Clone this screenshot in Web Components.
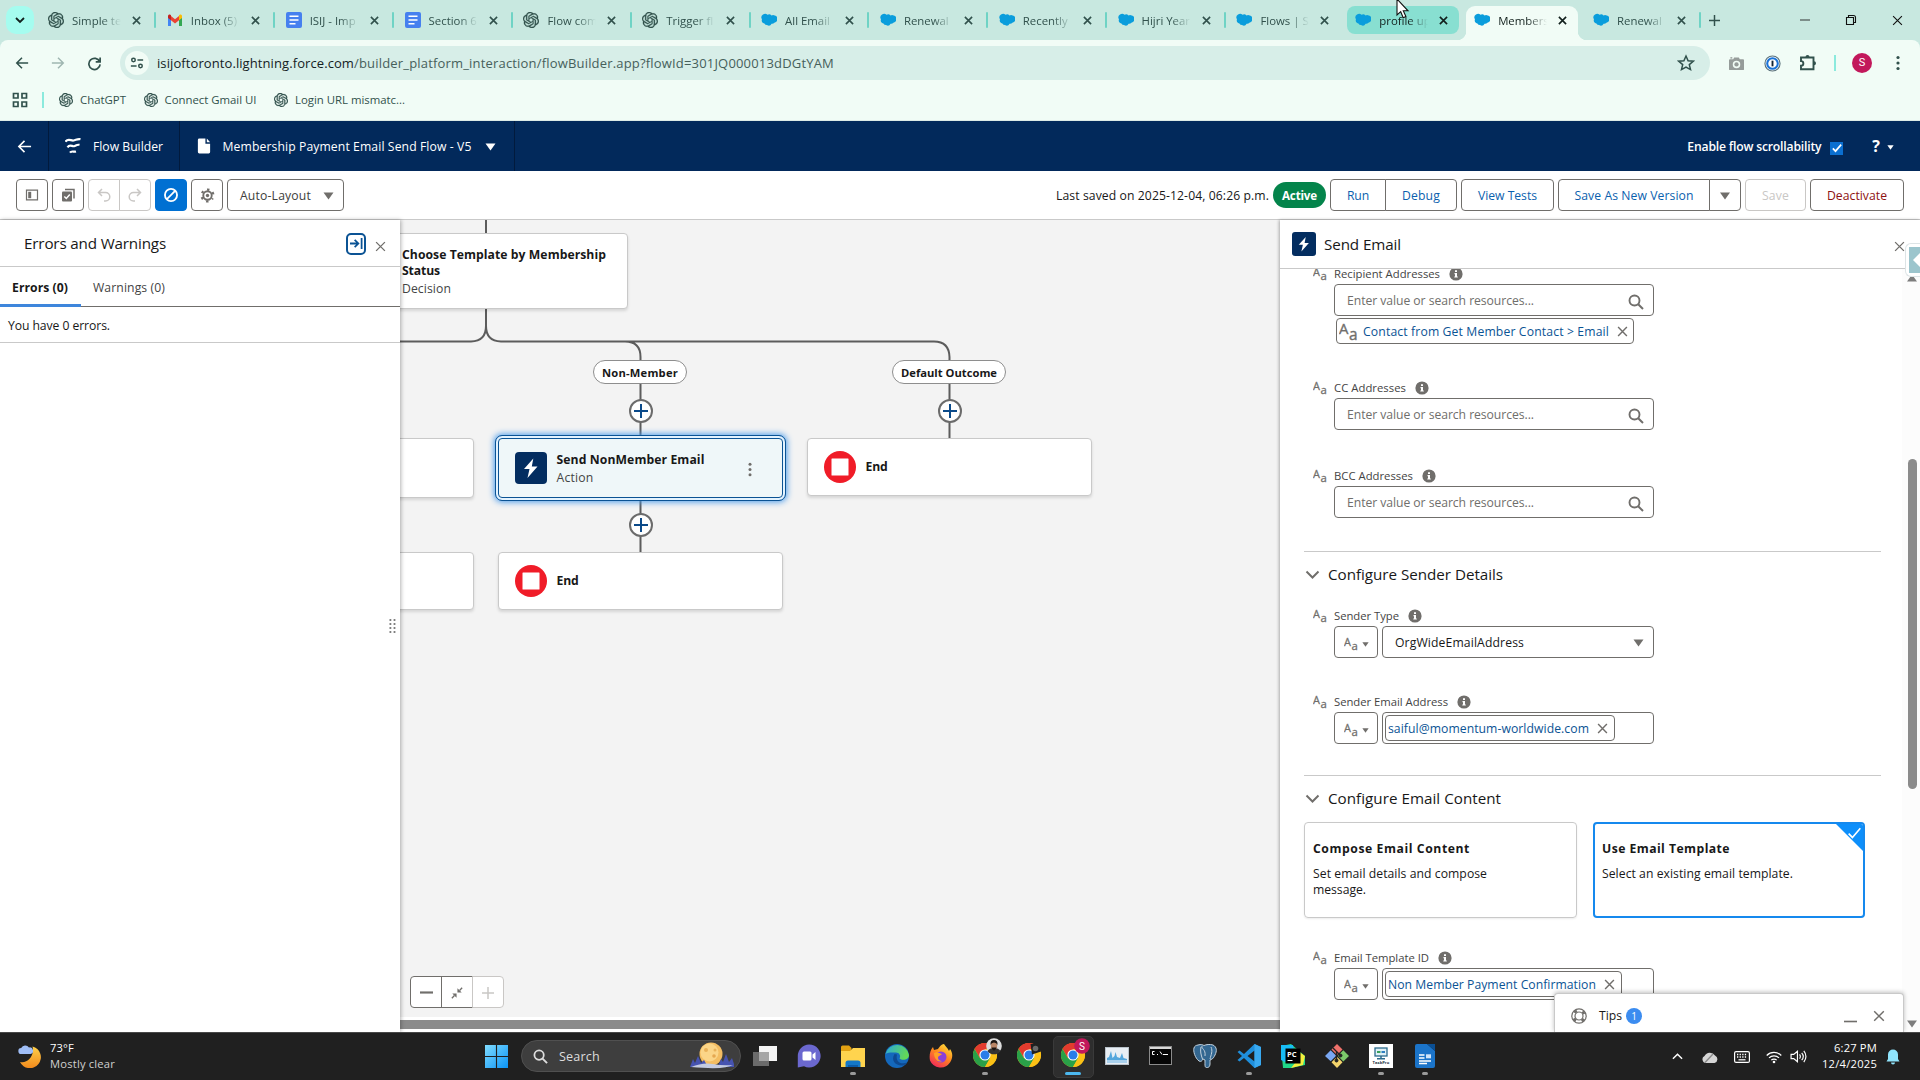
<!DOCTYPE html>
<html lang="en">
<head>
<meta charset="utf-8">
<title>Flow Builder</title>
<style>
html,body{margin:0;height:1080px;width:1920px;overflow:hidden}
body{font-family:"Open Sans","Noto Sans",sans-serif;font-size:12.2px;color:#181818;background:#fff}
</style>
</head>
<body>
<desktop-screen></desktop-screen>
<script>
const define = (tag, css, html) => customElements.define(tag, class extends HTMLElement {
  connectedCallback() {
    if (this.shadowRoot) return;
    const root = this.attachShadow({ mode: 'open' });
    root.innerHTML = `<style>*{box-sizing:border-box}${css}</style>${typeof html === 'function' ? html(this) : html}`;
  }
});

/* Text run whose letter spacing is tuned to a given width. */
customElements.define('fit-text', class extends HTMLElement {
  connectedCallback() {
    if (this.shadowRoot) return;
    this.attachShadow({ mode: 'open' }).innerHTML =
      '<style>:host{display:inline-block;white-space:nowrap;flex:none}</style><slot></slot>';
    const w = parseFloat(this.getAttribute('w'));
    if (!w) return;
    const n = this.textContent.length;
    const natural = this.getBoundingClientRect().width;
    this.style.letterSpacing = ((w - natural) / n).toFixed(3) + 'px';
    this.style.width = w + 'px';
  }
});

const chromeLogo = '<circle cx="12" cy="12" r="12" fill="#fbc116"/><path d="M12 12 1.6 6A12 12 0 0 1 22.4 6Z" fill="#e33b2e"/><path d="M12 6H22.4A12 12 0 0 0 1.6 6L6.8 15Z" fill="#e33b2e"/><path d="M1.6 6A12 12 0 0 0 12 24L17.2 15 12 12 6.8 15Z" fill="#2aa148"/><path d="M17.2 15 12 24A12 12 0 0 0 22.4 6H12Z" fill="#fbc116"/><circle cx="12" cy="12" r="5.6" fill="#fff"/><circle cx="12" cy="12" r="4.5" fill="#2a7de9"/>';
const ICONS = {
  openai: ['0 0 24 24', '<path fill="currentColor" stroke="currentColor" stroke-width=".5" d="M22.2819 9.8211a5.9847 5.9847 0 0 0-.5157-4.9108 6.0462 6.0462 0 0 0-6.5098-2.9A6.0651 6.0651 0 0 0 4.9807 4.1818a5.9847 5.9847 0 0 0-3.9977 2.9 6.0462 6.0462 0 0 0 .7427 7.0966 5.98 5.98 0 0 0 .511 4.9107 6.051 6.051 0 0 0 6.5146 2.9001A5.9847 5.9847 0 0 0 13.2599 24a6.0557 6.0557 0 0 0 5.7718-4.2058 5.9894 5.9894 0 0 0 3.9977-2.9001 6.0557 6.0557 0 0 0-.7475-7.0729zm-9.022 12.6081a4.4755 4.4755 0 0 1-2.8764-1.0408l.1419-.0804 4.7783-2.7582a.7948.7948 0 0 0 .3927-.6813v-6.7369l2.02 1.1686a.071.071 0 0 1 .038.052v5.5826a4.504 4.504 0 0 1-4.4945 4.4944zm-9.6607-4.1254a4.4708 4.4708 0 0 1-.5346-3.0137l.142.0852 4.783 2.7582a.7712.7712 0 0 0 .7806 0l5.8428-3.3685v2.3324a.0804.0804 0 0 1-.0332.0615L9.74 19.9502a4.4992 4.4992 0 0 1-6.1408-1.6464zM2.3408 7.8956a4.485 4.485 0 0 1 2.3655-1.9728V11.6a.7664.7664 0 0 0 .3879.6765l5.8144 3.3543-2.0201 1.1685a.0757.0757 0 0 1-.071 0l-4.8303-2.7865A4.504 4.504 0 0 1 2.3408 7.872zm16.5963 3.8558L13.1038 8.364 15.1192 7.2a.0757.0757 0 0 1 .071 0l4.8303 2.7913a4.4944 4.4944 0 0 1-.6765 8.1042v-5.6772a.79.79 0 0 0-.407-.667zm2.0107-3.0231l-.142-.0852-4.7735-2.7818a.7759.7759 0 0 0-.7854 0L9.409 9.2297V6.8974a.0662.0662 0 0 1 .0284-.0615l4.8303-2.7866a4.4992 4.4992 0 0 1 6.6802 4.66zM8.3065 12.863l-2.02-1.1638a.0804.0804 0 0 1-.038-.0567V6.0742a4.4992 4.4992 0 0 1 7.3757-3.4537l-.142.0805L8.704 5.459a.7948.7948 0 0 0-.3927.6813zm1.0976-2.3654l2.602-1.4998 2.6069 1.4998v2.9994l-2.5974 1.4997-2.6067-1.4997Z"/>'],
  gmail: ['0 0 16 16', '<path fill="#4285f4" d="M1 3.5V14h3V7.5L1 5z"/><path fill="#34a853" d="M15 3.5V14h-3V7.5L15 5z"/><path fill="#ea4335" d="M4 4v4.2l4 3.2 4-3.2V4L8 7.2z"/><path fill="#c5221f" d="M1 4a1.6 1.6 0 0 1 3-.7v5L1 5.9z"/><path fill="#fbbc04" d="M15 4a1.6 1.6 0 0 0-3-.7v5l3-2.4z"/>'],
  docs: ['0 0 16 16', '<rect width="16" height="16" rx="2" fill="#4680ef"/><path stroke="#fff" stroke-width="1.6" d="M3.5 4.2h9M3.5 8h9M3.5 11.8h6"/>'],
  cloud: ['0 0 16 14', '<path fill="#0a9ddc" d="M6.5 1.8a3.2 3.2 0 0 1 4 .6 3 3 0 0 1 3.3.1A3.7 3.7 0 0 1 13.4 9.700 3 3 0 0 1 10.600 10.800 3.300 3.300 0 0 1 6 12.100 2.900 2.900 0 0 1 3.400 10.500 3 3 0 0 1 1 6.300 3.400 3.400 0 0 1 2 1.600 3.500 3.500 0 0 1 6.500 1.800z"/>'],
  x: ['0 0 10 10', '<path stroke="currentColor" stroke-width="var(--sw,1.5)" d="M1 1l8 8M9 1l-8 8"/>'],
  chev: ['0 0 10 10', '<path fill="none" stroke="currentColor" stroke-width="var(--sw,1.8)" d="M1 3l4 4 4-4"/>'],
  chevup: ['0 0 12 12', '<path fill="none" stroke="currentColor" stroke-width="1.6" d="M1 8.500l5-5 5 5"/>'],
  plus: ['0 0 12 12', '<path stroke="currentColor" stroke-width="var(--sw,1.6)" d="M6 0v12M0 6h12"/>'],
  minus: ['0 0 12 12', '<path stroke="currentColor" stroke-width="var(--sw,1)" d="M0 6h12"/>'],
  restore: ['0 0 12 12', '<path fill="none" stroke="#111" stroke-width="1.100" d="M1.500 3.500h7v7h-7zM3.500 3.500v-2h5a2 2 0 0 1 2 2v5h-2"/>'],
  back: ['0 0 16 16', '<path fill="none" stroke="currentColor" stroke-width="var(--sw,1.7)" d="M15 8H2M8 2L2 8l6 6"/>'],
  fwd: ['0 0 16 16', '<path fill="none" stroke="currentColor" stroke-width="1.7" d="M1 8h13M8 2l6 6-6 6"/>'],
  reload: ['0 0 16 16', '<path fill="none" stroke="currentColor" stroke-width="1.800" d="M13.500 6A6 6 0 1 0 14 9M14 1.500V6.200H9.300"/>'],
  tune: ['0 0 16 16', '<g fill="none" stroke="#31514c" stroke-width="1.700"><circle cx="4" cy="4.500" r="2"/><circle cx="12" cy="11.500" r="2"/><path d="M8.500 4.500H15M1 11.500h6.500"/></g>'],
  star: ['0 0 18 18', '<path fill="none" stroke="#31514c" stroke-width="1.500" d="M9 2l2.100 4.700 5.100.500-3.900 3.400 1.200 5L9 13l-4.500 2.600 1.200-5L1.800 7.200l5.100-.500z"/>'],
  camera: ['0 0 16 16', '<path fill="#969c9a" fill-rule="evenodd" d="M5.500 1.500h5l1 2H15q1 0 1 1V14q0 1-1 1H1q-1 0-1-1V4.500q0-1 1-1h3.500zM8 5a4 4 0 1 0 0 8 4 4 0 0 0 0-8z"/><circle cx="8" cy="9" r="2.300" fill="#969c9a"/><path stroke="#969c9a" stroke-width="1.500" d="M1.500 2h2"/>'],
  onepass: ['0 0 18 18', '<circle cx="9" cy="9" r="8" fill="#fff" stroke="#587079" stroke-width="1.200"/><circle cx="9" cy="9" r="5.600" fill="#fff" stroke="#1a73d8" stroke-width="2.200"/><path stroke="#123" stroke-width="2" d="M9 6v6"/>'],
  puzzle: ['0 0 18 18', '<path fill="none" stroke="#31514c" stroke-width="1.900" d="M2 3.500h12.500v11.800H2v-3.500a2.300 2.300 0 0 0 0-4.700z"/><path fill="#31514c" d="M6.500 3a2 2 0 0 1 4 0zM15 7.300a2 2 0 0 1 0 4z"/>'],
  dots: ['0 0 4 16', '<g fill="currentColor"><circle cx="2" cy="2.500" r="1.600"/><circle cx="2" cy="8" r="1.600"/><circle cx="2" cy="13.500" r="1.600"/></g>'],
  apps: ['0 0 16 16', '<g fill="none" stroke="#31514c" stroke-width="1.700"><path d="M1.500 1.500h4.500v4.500H1.500zM10 1.500h4.500v4.500H10zM1.500 10h4.500v4.500H1.500zM10 10h4.500v4.500H10z"/></g>'],
  flow: ['0 0 16 18', '<g fill="none" stroke="#fff" stroke-width="2.200"><path d="M.500 4.800C3 .500 6 4 8.500 3.500S13 1.500 15.500 2.300"/><path d="M2.500 10.300C5 6.500 7 9.700 9 9.200s3-2 5.500-1.300"/><path d="M5 15.700c1.500-2.400 3.500-.500 6-1.200"/></g>'],
  file: ['0 0 14 17', '<path fill="#fff" d="M2 .500h6.500V6H13.500v9q0 1.500-1.500 1.500H2Q.500 16.500.500 15V2Q.500.500 2 .500zM10 .500l3.500 4H10z"/>'],
  tri: ['0 0 10 8', '<path fill="currentColor" d="M0 .500h10L5 7.500z"/>'],
  check: ['0 0 12 12', '<path fill="none" stroke="#fff" stroke-width="var(--sw,2)" d="M1 6.500l3.200 3.300L11 2"/>'],
  panel: ['0 0 14 14', '<path fill="none" stroke="#706e6b" stroke-width="1.200" d="M1.500 2.200h11v9.600h-11z"/><path fill="#706e6b" d="M3.200 3.800h3v6.400h-3z"/>'],
  multi: ['0 0 14 14', '<path fill="none" stroke="#706e6b" stroke-width="1.500" d="M4 1.500h9v9"/><rect x="1" y="3.500" width="10" height="10" rx="1" fill="#706e6b"/><path fill="none" stroke="#fff" stroke-width="1.500" d="M3.300 8.500l2 2 3.500-4"/>'],
  undo: ['0 0 14 14', '<path fill="none" stroke="currentColor" stroke-width="1.500" d="M5 1L1.500 4.500 5 8M1.500 4.500H8.500a4.300 4.300 0 0 1 0 8.600H7"/>'],
  redo: ['0 0 14 14', '<path fill="none" stroke="currentColor" stroke-width="1.500" d="M9 1l3.500 3.500L9 8M12.500 4.500H5.500a4.300 4.300 0 0 0 0 8.600H7"/>'],
  ban: ['0 0 14 14', '<circle cx="7" cy="7" r="5.300" fill="none" stroke="#fff" stroke-width="1.600"/><path stroke="#fff" stroke-width="1.600" d="M3.400 10.600l7.200-7.200"/>'],
  gear: ['0 0 16 16', '<circle cx="8" cy="8" r="4.500" fill="none" stroke="#706e6b" stroke-width="2"/><circle cx="8" cy="8" r="6.300" fill="none" stroke="#706e6b" stroke-width="2.400" stroke-dasharray="2.400 4.200" stroke-dashoffset="1.200" transform="rotate(30 8 8)"/><circle cx="8" cy="8" r="1.800" fill="#706e6b"/>'],
  collapse: ['0 0 14 14', '<path fill="none" stroke="#0b5394" stroke-width="1.900" d="M0 7h8.500M5 3l4 4-4 4M12.500 1v12"/>'],
  bolt: ['0 0 32 32', '<rect width="32" height="32" rx="4" fill="#032d60"/><path fill="#fff" d="M18.300 6.500L9 17h5.500l-2 9L22.500 14.500H16.800z"/>'],
  end: ['0 0 32 32', '<circle cx="16" cy="16" r="16" fill="#f01c28"/><rect x="7.500" y="7.500" width="17" height="17" rx=".5" fill="#fff"/>'],
  search: ['0 0 16 16', '<circle cx="6.500" cy="6.500" r="5" fill="none" stroke="currentColor" stroke-width="1.900"/><path stroke="currentColor" stroke-width="2" d="M10.200 10.200l4.800 4.800"/>'],
  info: ['0 0 14 14', '<circle cx="7" cy="7" r="6.600" fill="#706e6b"/><path fill="#fff" d="M6 3.200h2v1.700H6zM5.500 6H8v3.400h.800v1.200H5.300V9.400H6V7.200h-.5z"/>'],
  fit: ['0 0 14 14', '<g stroke="#706e6b" stroke-width="1.600" fill="#706e6b"><path d="M1 13l3-3M13 1l-3 3"/><path stroke="none" d="M1.500 7.500h5v5zM12.500 6.500h-5v-5z"/></g>'],
  ring: ['0 0 16 16', '<g fill="none" stroke="#706e6b"><circle cx="8" cy="8" r="7.200" stroke-width="1.200"/><circle cx="8" cy="8" r="4" stroke-width="1.200"/><circle cx="8" cy="8" r="5.600" stroke-width="2.800" stroke-dasharray="3 5.800" stroke-dashoffset="-2.900"/></g>'],
  pointer: ['0 0 14 22', '<path fill="#fff" stroke="#111" stroke-width="1.100" d="M1 1v16l3.700-3.300 2.500 6 2.700-1.200-2.600-5.700H12z"/>'],
  moon: ['0 0 24 24', '<defs><linearGradient id="m" x2="0" y2="1"><stop stop-color="#ffd04a"/><stop offset="1" stop-color="#f28a1c"/></linearGradient></defs><path fill="url(#m)" d="M14.500 2.500A11 11 0 1 1 2 18C9 20 17 12 14.500 2.500z"/><path fill="#9fbdf5" d="M3.500 10a3 3 0 0 1-.3-6A4.500 4.500 0 0 1 11 3.500 3.300 3.300 0 0 1 12.500 10z"/>'],
  win: ['0 0 24 24', '<defs><linearGradient id="w" x2="1" y2="1"><stop stop-color="#80dcff"/><stop offset="1" stop-color="#0a93f5"/></linearGradient></defs><path fill="url(#w)" d="M0 0h11.400v11.400H0zM12.600 0H24v11.400H12.600zM0 12.600h11.400V24H0zM12.600 12.600H24V24H12.600z"/>'],
  scene: ['0 0 44 28', '<circle cx="21" cy="12" r="11.500" fill="#f3bd62"/><circle cx="19.500" cy="10.500" r="9" fill="#fbd588"/><circle cx="16" cy="8" r="2" fill="#e9b25a"/><circle cx="25" cy="8" r="1.500" fill="#e9b25a"/><circle cx="24" cy="14" r="1.800" fill="#e5a850"/><path fill="#4653b0" d="M0 25l3-8 2 4 3-7 3 7 3-3 4 7h10l3-8 2 3 3-8 3 8 3-4 3 9z"/><path fill="#c4cbe0" d="M1 25q12-5 22-3t20 1q-8 5-42 2z"/>'],
  taskview: ['0 0 24 24', '<rect x="0" y="8" width="16" height="14" fill="#6b6b6b"/><rect x="6" y="2" width="18" height="15" fill="#f4f4f4"/><path fill="#a6a6a6" d="M6 8h10v9H6z"/>'],
  chat: ['0 0 24 24', '<path fill="#6b68cf" d="M12 .500a11.500 11.500 0 1 1-5 21.800L.800 23.500V12A11.400 11.400 0 0 1 12 .500z"/><rect x="5.500" y="7.500" width="9" height="9" rx="1.500" fill="#fff"/><path fill="#fff" d="M15.500 10.500l3-2.500v8l-3-2.500z"/>'],
  folder: ['0 0 24 24', '<path fill="#e2a112" d="M0 3q0-1.500 1.500-1.500H8L10.500 4v5H0z"/><path fill="#ffd44e" d="M0 7h9l3-3h12v19H0z"/><path fill="#1478c8" d="M4.500 23v-4q0-2.500 2.500-2.500h10q2.500 0 2.500 2.500v4z"/><path fill="#0b5ba8" d="M7 21h10v2H7z"/>'],
  edge: ['0 0 24 24', '<defs><linearGradient id="e" x2="1" y2=".3"><stop stop-color="#2aa8dd"/><stop offset="1" stop-color="#63d957"/></linearGradient></defs><circle cx="12" cy="12" r="12" fill="#1468bc"/><path fill="url(#e)" d="M.500 10A12 12 0 0 1 24 11c0 5-7 6-9.500 3.500 1.800-3-.5-6-3.500-6S3 8 .500 10z"/><path fill="#0e4a92" d="M9.500 10c-4 6 1 12 8 11.500 2 0 3.500-1.500 4.500-3-3 1.500-8 1-9.500-2-1-2-1-4-.5-6z"/>'],
  firefox: ['0 0 24 24', '<defs><linearGradient id="f" x1=".8" y1="0" x2=".2" y2="1"><stop stop-color="#ffe03a"/><stop offset=".45" stop-color="#ff8a1e"/><stop offset="1" stop-color="#f0235e"/></linearGradient></defs><path fill="url(#f)" d="M15 0c1 2 4 4 5 7l1-2c3 4 3 9 0 13.500A11.500 11.500 0 0 1 1 16.500C0 12 1 6 4 3l1 3 4-1c0 0 3-5 6-5z"/><circle cx="12" cy="13" r="5.500" fill="#8b3fd8"/><path fill="#ff9f26" d="M5 9c3-2 5 0 8 1-1 2-4 1-4 4 0 2 2 3 4 3-4 2-8-2-8-8z"/>'],
  chrome: ['0 0 24 24', chromeLogo],
  chromeface: ['0 0 30 30', '<g transform="translate(0 5)">' + chromeLogo + '</g><circle cx="21" cy="8" r="7.800" fill="#ddd"/><path fill="#333" d="M14.500 13q2-3 6.500-3t6.500 3a8 8 0 0 1-13 0z"/><ellipse cx="21" cy="7.500" rx="3.200" ry="4.300" fill="#b98566"/><path fill="#1c1512" d="M17.500 7q-.5-5 3.500-5t3.500 5q-1-2.500-3.500-2.500T17.500 7zM18.500 9.500h5q-.5 3-2.500 3t-2.500-3z"/>'],
  chromecam: ['0 0 30 30', '<g transform="translate(0 5)">' + chromeLogo + '</g><path fill="#202020" d="M13.500 6l8.500-1.500 2 9-9 3z"/><circle cx="18.500" cy="10.500" r="2.800" fill="#6b6b6b"/>'],
  chromes: ['0 0 30 30', '<g transform="translate(0 5)">' + chromeLogo + '</g><circle cx="21" cy="8" r="7.800" fill="#c2185b"/><text x="21" y="11.700" font-size="10" fill="#fff" text-anchor="middle" font-family="Roboto,sans-serif">S</text>'],
  monitor: ['0 0 24 24', '<rect x=".5" y="3.500" width="23" height="17" fill="#e8eef4" stroke="#b9c2ca"/><path fill="#54a6dc" d="M2 19v-5l2-1 2-6 1.500 7 2-2 1-4 1.500 5 3 1 2-5 1.500 5 3.500 1v4z"/><path fill="#a9d0ec" d="M2 16h20v3H2z"/>'],
  cmd: ['0 0 24 24', '<rect x=".5" y="2.500" width="22" height="18" fill="#050505" stroke="#8b8b8b"/><path fill="#d8d8d8" d="M1 3h21v2H1z"/><path stroke="#fff" fill="none" d="M5.500 7.500h-2v3h2M8 10.500h1M11 7.500l2 3M14 10.500h5"/>'],
  pg: ['0 0 24 24', '<path fill="#336791" stroke="#c3d1dd" stroke-width="1" d="M5 1c3-1 5 0 6 .5C13 .500 17 0 20 1c4 2 4 6 2 10-1 2-2 4-4 4.500L17 16c0 4 .5 7-2.500 7.500S12 22 12 16l-2-1c-1 2-2 3-4 2C2 14 0 7 1 4c.500-2 2-2.600 4-3z"/><path fill="none" stroke="#c3d1dd" d="M8 3c-1 4 0 8 1.500 12M18 3c2 4 0 8-1 12M9 2c-1 3 4 3 3 10"/>'],
  code: ['0 0 24 24', '<path fill="#1f8fdc" d="M17.500 0L24 3v18l-6.500 3L7 14 2.500 17.500.500 16 5 12 .500 8l2-1.500L7 10zM17.500 6.500L10.500 12l7 5.500z"/><path fill="#39a9f0" d="M17.500 0L24 3v18l-6.500 3z"/>'],
  pycharm: ['0 0 24 24', '<path fill="#21d789" d="M0 2L10 0l14 12v9l-14 3L2 24z"/><path fill="#18bdf5" d="M0 1h12l1 6L4 18 0 16z"/><path fill="#f5ef3c" d="M17 7l7 5-2 9-12 3 8-10z"/><rect x="4.500" y="4.500" width="15" height="15" fill="#000"/><text x="6" y="12.500" font-size="7.600" font-weight="700" fill="#fff" font-family="Open Sans,sans-serif">PC</text><path stroke="#fff" d="M6.500 16.500h5"/>'],
  git: ['0 0 24 24', '<path fill="#f0716b" d="M12 0l5.500 5.500L12 11 6.500 5.500z"/><path fill="#7aa7f2" d="M5.700 6.300l5.500 5.500-5.500 5.500L0 12z"/><path fill="#7cc96a" d="M18.300 6.300L24 12l-5.700 5.500-5.500-5.700z"/><path fill="#f3d46c" d="M12 12.700l5.500 5.500L12 24l-5.500-5.800z"/><g fill="#222" stroke="#222"><circle cx="11.500" cy="16.500" r="1.500"/><circle cx="15.500" cy="11.500" r="1.500"/><path fill="none" stroke-width="1.400" d="M8 4l3.500 3.500v8M11.500 7.500l4 4"/></g>'],
  taskpro: ['0 0 24 24', '<rect width="24" height="24" fill="#fff"/><rect x="6" y="4" width="12" height="8" fill="#dff0f6" stroke="#2b6b8d" stroke-width="1.300"/><path stroke="#39a05a" stroke-width="2" d="M8 8h3.500"/><path stroke="#2d7fc1" stroke-width="2" d="M12.500 8H16"/><path stroke="#2b6b8d" stroke-width="1.500" d="M12 12v2.500M8 14.700h8"/><text x="12" y="20" font-size="4.200" font-weight="700" fill="#234" text-anchor="middle" font-family="Open Sans,sans-serif">TaskPro</text>'],
  writer: ['0 0 24 24', '<path fill="#1b74c9" d="M2 2q0-2 2-2h10l8 7v15q0 2-2 2H4q-2 0-2-2z"/><path fill="#0a4f94" d="M14 0h8v7z"/><path stroke="#fff" stroke-width="1.300" d="M6 11h5.500M6 14h5.500M6 17h12M6 19.500h8"/><rect x="13" y="10.300" width="5" height="4" fill="#cfe4fa"/>'],
  wcloud: ['0 0 16 16', '<path fill="#d5d5d5" d="M4 14A3.700 3.700 0 0 1 2.500 7 6 6 0 0 1 13 6.500a4 4 0 0 1-.5 7.500z"/><path stroke="#888" stroke-width="1.300" d="M3 13.500L11 5"/>'],
  kbd: ['0 0 16 12', '<rect x=".6" y=".6" width="14.800" height="10.800" rx="1.500" fill="none" stroke="#fff" stroke-width="1.200"/><path stroke="#fff" stroke-width="1.300" stroke-dasharray="1.300 1.300" d="M3 3.500h10M3 6h10"/><path stroke="#fff" stroke-width="1.200" d="M4.500 8.800h7"/>'],
  wifi: ['0 0 16 14', '<g fill="none" stroke="#fff" stroke-width="1.200"><path d="M.700 5.500a10.300 10.300 0 0 1 14.600 0M3 7.900a7 7 0 0 1 10 0M5.300 10.200a3.800 3.800 0 0 1 5.400 0"/></g><circle cx="8" cy="12" r="1.300" fill="#fff"/>'],
  vol: ['0 0 16 14', '<g fill="none" stroke="#fff" stroke-width="1.100"><path d="M1 5h2.500L7 2v10L3.500 9H1zM9 5q1.500 2 0 4M11 3.500q3 3.500 0 7M13 1.800q4 5.200 0 10.400"/></g>'],
  bell: ['0 0 14 16', '<path fill="#8fe3fb" d="M7 .500a5 5 0 0 1 5 5V10l1.500 2.500H.500L2 10V5.500a5 5 0 0 1 5-5zM5 13.500h4a2 2 0 0 1-4 0z"/>'],
  handle: ['0 0 8 16', '<g fill="#555"><path d="M.5 1.200h1.800v1.600H.5zM4.600 1.200h1.800v1.600H4.600zM.5 5.200h1.800v1.600H.5zM4.600 5.200h1.800v1.600H4.600zM.5 9.200h1.800v1.600H.5zM4.600 9.200h1.800v1.600H4.600zM.5 13.200h1.800v1.600H.5zM4.600 13.200h1.800v1.600H4.600z"/></g>'],
  aa: ['0 0 16 16', '<g fill="#706e6b" stroke="#706e6b" stroke-width=".3" font-family="Open Sans,sans-serif"><text x="0" y="10" font-size="12.500">A</text><text x="8.500" y="15.400" font-size="13">a</text></g>']
};
define('ui-icon', ':host{display:inline-flex;flex:none}svg{display:block;flex:none}', el => {
  const [vb, body] = ICONS[el.getAttribute('name')];
  const w = el.getAttribute('w') || 16, h = el.getAttribute('h') || w;
  return `<svg width="${w}" height="${h}" viewBox="${vb}">${body}</svg>`;
});
const ico = (n, w, h, s = '') => `<ui-icon name="${n}" w="${w}" h="${h || w}" style="${s}"></ui-icon>`;

/* ---------- Browser ---------- */
define('browser-tab', `
:host{display:flex;align-items:center;width:118.850px;height:40px;position:relative;flex:none;color:#31514c;font-size:11.400px}
.fav{width:16px;margin-left:8px;display:flex;justify-content:center}
.t{width:49px;margin-left:8px;overflow:hidden;white-space:nowrap;-webkit-mask:linear-gradient(90deg,#000 60%,transparent)}
.sep{width:2px;height:16px;background:#6fd3c5;margin:0 2.500px 0 auto;border-radius:1px}
:host([state=hover]),:host([state=active]){color:#12201d}
.bg{display:none;position:absolute;z-index:-1}
:host([state=hover]) .bg{display:block;left:0;width:112px;top:6px;height:28px;border-radius:8px;background:#88dfd1}
:host([state=active]) .bg{display:block;left:0;width:112px;top:6px;height:34px;border-radius:9px 9px 0 0;background:#f1fcf6}
:host([state=active]) .bg:before,:host([state=active]) .bg:after{content:"";position:absolute;bottom:0;width:9px;height:9px}
:host([state=active]) .bg:before{left:-9px;background:radial-gradient(circle at 0 0,transparent 9px,#f1fcf6 9.500px)}
:host([state=active]) .bg:after{right:-9px;background:radial-gradient(circle at 100% 0,transparent 9px,#f1fcf6 9.500px)}
:host([nosep]) .sep{visibility:hidden}`,
 el => `<div class="bg"></div><div class="fav">${ico(el.getAttribute('icon'), 16)}</div><div class="t"><slot></slot></div>${ico('x', 9, 9, 'margin-left:11px;--sw:1.8')}<div class="sep"></div>`);

define('tab-strip', `
:host{display:flex;height:40px;background:#c8e8e0;align-items:center;color:#31514c;position:relative;z-index:0}
.dd{width:28px;height:28px;border-radius:10px;background:#a5fcef;margin:0 6px 0 6px;display:flex;align-items:center;justify-content:center;color:#12201d}
.btn{width:46px;display:flex;justify-content:center;color:#111}`,
`<div class="dd">${ico('chev', 10)}</div>
${[['openai','Simple te'],['gmail','Inbox (5)'],['docs','ISIJ - Imp'],['docs','Section 6'],['openai','Flow com'],['openai','Trigger fl'],['cloud','All Email'],['cloud','Renewal'],['cloud','Recently'],['cloud','Hijri Year'],['cloud','Flows | Sa','','nosep'],['cloud','profile up','hover','nosep'],['cloud','Members','active','nosep'],['cloud','Renewal']].map(t => `<browser-tab icon="${t[0]}" ${t[2] ? `state="${t[2]}"` : ''} ${t[3] || ''}>${t[1]}</browser-tab>`).join('')}
<div style="width:22px;display:flex;justify-content:center">${ico('plus', 11)}</div>
<div style="flex:1"></div><div class="btn">${ico('minus', 10)}</div><div class="btn">${ico('restore', 12)}</div><div class="btn">${ico('x', 11, 11, '--sw:1')}</div>`);

define('address-row', `
:host{display:flex;height:46px;align-items:center;padding-left:4px;background:#f1fcf6;border-radius:8px 8px 0 0;color:#31514c}
.c{width:36px;display:flex;justify-content:center;flex:none}
.omni{width:1590px;height:34px;border-radius:17px;background:#d7eee8;margin:0 8px;display:flex;align-items:center;font-size:13px}
.tune{width:24px;height:24px;border-radius:50%;background:#f1fcf6;margin:0 8px 0 5px;display:flex;align-items:center;justify-content:center}
.av{width:20px;height:20px;border-radius:50%;background:#c2185b;color:#fff;font:11px/20px Roboto,sans-serif;text-align:center}`,
`<div class="c">${ico('back', 14)}</div><div class="c" style="color:#9fb6b1">${ico('fwd', 14)}</div><div class="c">${ico('reload', 15)}</div>
<div class="omni"><div class="tune">${ico('tune', 14)}</div><fit-text w="197" style="color:#14211f">isijoftoronto.lightning.force.com</fit-text><fit-text w="480" style="color:#46605b">/builder_platform_interaction/flowBuilder.app?flowId=301JQ000013dDGtYAM</fit-text><div style="flex:1"></div>${ico('star', 18, 18, 'margin-right:15px')}</div>
<div class="c">${ico('camera', 15)}</div><div class="c">${ico('onepass', 17)}</div><div class="c">${ico('puzzle', 18)}</div>
<div style="width:18px;display:flex;justify-content:center"><div style="width:2px;height:16px;background:#8beadd"></div></div>
<div class="c"><div class="av">S</div></div><div class="c">${ico('dots', 4, 16)}</div>`);

define('bookmark-bar', `
:host{display:flex;height:35px;padding-bottom:7px;background:#f1fcf6;align-items:center;border-bottom:1px solid #dcebe6;color:#31514c;font-size:11.400px;padding-left:12px}
i{width:2px;height:16px;background:#8beadd;margin:0 15px 0 14px}
fit-text{margin:-1px 17.500px 0 7px}`,
`${ico('apps', 16)}<i></i>${ico('openai', 14)}<fit-text w="46">ChatGPT</fit-text>${ico('openai', 14)}<fit-text w="92">Connect Gmail UI</fit-text>${ico('openai', 14)}<fit-text w="110">Login URL mismatc...</fit-text>`);

/* ---------- Builder header and toolbar ---------- */
define('builder-header', `
:host{display:flex;height:50px;background:#02295b;color:#fff;font-size:12.200px}
div{display:flex;align-items:center}.cell{border-right:1px solid #011a3d}`,
`<div class="cell" style="width:49px;justify-content:center">${ico('back', 15)}</div>
<div class="cell" style="width:131px;padding-left:16px">${ico('flow', 16, 18)}<fit-text w="70" style="margin-left:12px">Flow Builder</fit-text></div>
<div class="cell" style="width:335px;padding-left:17px">${ico('file', 14, 16)}<fit-text w="249" style="margin-left:11.500px">Membership Payment Email Send Flow - V5</fit-text>${ico('tri', 11, 8, 'margin:2px 0 0 13px')}</div>
<div style="flex:1"></div>
<div><fit-text w="134" style="font-weight:600">Enable flow scrollability</fit-text><div style="width:13px;height:13px;background:#0b6fd0;margin:4px 0 0 9px;justify-content:center">${ico('check', 10)}</div><b style="margin-left:29px;font-size:16px">?</b>${ico('tri', 7, 5, 'margin:2px 26px 0 7px')}</div>`);

define('tool-button', `
:host{display:flex;align-items:center;justify-content:center;height:32px;border:1px solid #706e6b;border-radius:4px;background:#fff;color:#0b5fae;font-size:12.200px;flex:none;margin-left:4px}
:host([pos=first]){border-radius:4px 0 0 4px}
:host([pos=mid]){border-radius:0;margin-left:-1px}
:host([pos=last]){border-radius:0 4px 4px 0;margin-left:-1px}
:host([off]){border-color:#c9c7c5;color:#c9c7c5}
:host([on]){background:#0070d2;border-color:#0070d2}`, '<slot></slot>');

define('builder-toolbar', `
:host{display:flex;height:49px;background:#fff;border-bottom:1px solid #c9c9c9;align-items:center;padding:0 16px 0 12px}
.pill{height:26px;width:53px;border-radius:13px;background:#04844b;color:#fff;font-weight:700;display:flex;align-items:center;justify-content:center;margin-left:4px;font-size:11.600px}`,
`<tool-button style="width:32px">${ico('panel', 14)}</tool-button><tool-button style="width:32px">${ico('multi', 14)}</tool-button>
<tool-button pos="first" off style="width:32px">${ico('undo', 14)}</tool-button><tool-button pos="last" off style="width:32px">${ico('redo', 14)}</tool-button>
<tool-button on style="width:32px">${ico('ban', 16)}</tool-button><tool-button style="width:32px">${ico('gear', 15)}</tool-button>
<tool-button style="width:117px;color:#3e3e3c;justify-content:flex-start;padding-left:12px"><fit-text w="71">Auto-Layout</fit-text>${ico('tri', 11, 8, 'margin:2px 0 0 12px;color:#706e6b')}</tool-button>
<div style="flex:1"></div><fit-text w="213">Last saved on 2025-12-04, 06:26 p.m.</fit-text><div class="pill"><fit-text w="35">Active</fit-text></div>
<tool-button pos="first" style="width:56px"><fit-text w="22">Run</fit-text></tool-button><tool-button pos="last" style="width:72px"><fit-text w="38">Debug</fit-text></tool-button>
<tool-button style="width:93px"><fit-text w="59">View Tests</fit-text></tool-button>
<tool-button pos="first" style="width:152px"><fit-text w="119">Save As New Version</fit-text></tool-button><tool-button pos="last" style="width:32px;color:#706e6b">${ico('tri', 10, 8, 'margin-top:2px')}</tool-button>
<tool-button off style="width:61px"><fit-text w="27">Save</fit-text></tool-button><tool-button style="width:94px;color:#8e1212"><fit-text w="60">Deactivate</fit-text></tool-button>`);

/* ---------- Left panel ---------- */
define('errors-panel', `
:host{display:flex;flex-direction:column;width:400px;background:#fff;box-shadow:1px 0 4px rgba(0,0,0,.3);z-index:2;flex:none}
.head{height:47px;border-bottom:1px solid #c9c9c9;display:flex;align-items:center;padding-left:24px;font-size:15.200px}
.btn{width:20px;height:22px;border:2px solid #0b5394;border-radius:5px;display:flex;align-items:center;justify-content:center;margin:1px 0 0 auto}
.tabs{height:40px;display:flex;border-bottom:1px solid #706e6b;font-size:12.200px;color:#444}
.tabs div{display:flex;align-items:center;padding:1px 12px 0;height:40px}
.tabs .on{border-bottom:3px solid #3e86dc;color:#181818;font-weight:700;padding-top:4px;width:81px}
.msg{height:36px;border-bottom:1px solid #c9c9c9;padding:2px 0 0 8px;display:flex;align-items:center}`,
`<div class="head"><fit-text w="142">Errors and Warnings</fit-text><div class="btn">${ico('collapse', 13)}</div>${ico('x', 11, 11, 'margin:6px 14px 0 9px;color:#706e6b;--sw:1.2')}</div>
<div class="tabs"><div class="on"><fit-text w="56">Errors (0)</fit-text></div><div><fit-text w="72">Warnings (0)</fit-text></div></div>
<div class="msg"><fit-text w="102">You have 0 errors.</fit-text></div>
<div style="display:flex;justify-content:flex-end;padding:275px 3px 0 0">${ico('handle', 8, 16)}</div>`);

/* ---------- Canvas ---------- */
define('flow-node', `
:host{position:absolute;display:flex;align-items:center;background:#fff;border:1px solid #c9c9c9;border-radius:4px;box-shadow:0 2px 3px rgba(0,0,0,.12);padding-left:16px}
:host([selected]){background:#eff7f9;border:1px solid #0b5394;outline:1px solid #0b5394;outline-offset:2px;box-shadow:0 0 0 2px #e3f3ff,0 0 6px 4px #4a9bea}
.tx{margin-left:9.500px;line-height:18px;display:flex;flex-direction:column}
:host([selected]) .tx{margin-top:2px}
b{color:#181818}span{color:#444}`,
el => `${ico(el.getAttribute('icon'), 32)}<div class="tx"><b><fit-text w="${el.getAttribute('tw')}">${el.getAttribute('title-text')}</fit-text></b>${el.hasAttribute('sub') ? `<span><fit-text w="37">${el.getAttribute('sub')}</fit-text></span>` : ''}</div>${el.hasAttribute('selected') ? ico('dots', 4, 15, 'color:#706e6b;margin:2px 30px 0 auto') : ''}`);
define('flow-pill', `
:host{position:absolute;display:flex;align-items:center;justify-content:center;height:24px;border:1px solid #8e8e8e;border-radius:12px;background:#fff;font-weight:700;font-size:11.200px}`, '<slot></slot>');
define('flow-add', `
:host{position:absolute;width:24px;height:24px;border:2px solid #6b6b6b;border-radius:50%;background:#fff;display:flex;align-items:center;justify-content:center;color:#0b4a8a}`, ico('plus', 14, 14, '--sw:1.7'));

define('flow-canvas', `
:host{display:flex;flex-direction:column;width:880px;flex:none;background:#fff}
.area{height:797px;background:#f3f3f3;position:relative;overflow:hidden}
.bar{height:9px;margin-top:3px;background:#8b8b8b}
.lines{position:absolute;left:0;top:0}
.card{position:absolute;background:#fff;border:1px solid #c9c9c9;border-radius:4px;box-shadow:0 2px 3px rgba(0,0,0,.12)}
.dec{display:flex;flex-direction:column;padding:13px 0 0 100px}
.zoom{position:absolute;left:10px;top:756px;display:flex}`,
`<div class="area">
<svg class="lines" width="880" height="797" fill="none" stroke="#5c5c5c" stroke-width="2"><path d="M86 0V14M86 88v18q0 15 15 15.500H534q15 0 15.500 15.500V218M86 88v18q0 15-15 15.500H0M225 121.500q15.500 0 15.500 15.500V332"/></svg>
<div class="card dec" style="left:-99px;top:13px;width:327px;height:76px"><b style="line-height:16px"><fit-text w="204">Choose Template by Membership</fit-text><br><fit-text w="38">Status</fit-text></b><span style="line-height:18px;color:#444;margin-top:1px"><fit-text w="49">Decision</fit-text></span></div>
<div class="card" style="left:-110px;top:218px;width:184px;height:60px"></div>
<div class="card" style="left:-110px;top:332px;width:184px;height:58px"></div>
<flow-pill style="left:193px;top:140px;width:94px"><fit-text w="76">Non-Member</fit-text></flow-pill>
<flow-pill style="left:492px;top:140px;width:114px"><fit-text w="96">Default Outcome</fit-text></flow-pill>
<flow-add style="left:228.500px;top:179px"></flow-add><flow-add style="left:537.500px;top:179px"></flow-add><flow-add style="left:228.500px;top:293px"></flow-add>
<flow-node selected icon="bolt" title-text="Send NonMember Email" tw="148" sub="Action" style="left:98px;top:218px;width:285px;height:60px"></flow-node>
<flow-node icon="end" title-text="End" tw="22" style="left:407px;top:218px;width:285px;height:58px"></flow-node>
<flow-node icon="end" title-text="End" tw="22" style="left:98px;top:332px;width:285px;height:58px"></flow-node>
<div class="zoom"><tool-button pos="first" style="width:32px;margin:0;color:#706e6b">${ico('minus', 13, 13, '--sw:2;margin:1px 0 0 1px')}</tool-button><tool-button pos="mid" style="width:32px;color:#706e6b">${ico('fit', 12, 12, 'margin-top:2px')}</tool-button><tool-button pos="last" off style="width:32px">${ico('plus', 12, 12, '--sw:1.5;margin-top:2px')}</tool-button></div>
</div><div class="bar"></div>`);

/* ---------- Right panel ---------- */
define('field-label', `
:host{display:flex;align-items:center;height:20px;padding:0 0 1px 33px;color:#444;font-size:11.300px}
fit-text{margin:-1px 9px 0 7px}`, el => `${ico('aa', 14, 14, 'margin-top:1px')}<fit-text w="${el.getAttribute('w')}">${el.getAttribute('text')}</fit-text>${ico('info', 14)}`);
define('lookup-input', `
:host{display:flex;align-items:center;width:320px;height:32px;margin-left:54px;border:1px solid #706e6b;border-radius:4px;background:#fff;color:#706e6b;padding:1px 9px 0 12px;justify-content:space-between}`,
`<fit-text w="187">Enter value or search resources...</fit-text>${ico('search', 16, 16, 'margin-top:3px')}`);
define('type-button', `
:host{display:flex;align-items:center;justify-content:center;width:44px;height:32px;border:1px solid #706e6b;border-radius:4px;color:#706e6b;margin-right:4px;flex:none}`,
`${ico('aa', 14, 14, 'margin-top:3px')}${ico('tri', 7, 5, 'margin:4px 0 0 4px')}`);
define('value-pill', `
:host{display:flex;align-items:center;height:26px;border:1px solid #706e6b;border-radius:4px;color:#0b5394;background:#fff;flex:none}`,
`<slot></slot>${ico('x', 11, 11, 'margin:1px 0 0 7.500px;color:#706e6b;--sw:1.3')}`);
define('section-title', `
:host{display:flex;align-items:center;height:24px;padding:0 0 2px 25px;font-size:15.200px}fit-text{margin-left:8px}`,
el => `${ico('chev', 15, 15, 'color:#706e6b;--sw:1.3;margin-top:1px')}<fit-text w="${el.getAttribute('w')}">${el.getAttribute('text')}</fit-text>`);
define('choice-card', `
:host{display:block;width:273px;height:96px;border:1px solid #c9c9c9;border-radius:4px;padding:18px 0 0 8px;line-height:16px;position:relative;box-shadow:0 1px 2px rgba(0,0,0,.08)}
:host([checked]){width:272px;border:2px solid #1589ee;padding:17px 0 0 7px;overflow:hidden;box-shadow:none}
.ttl{font-weight:700;margin-bottom:9px}
.corner{position:absolute;right:-1px;top:-1px;width:29px;height:29px;background:#0d8ffb;clip-path:polygon(0 0,100% 0,100% 100%)}
.corner ui-icon{position:absolute;left:12px;top:3px}`,
el => `<div class="ttl"><slot name="t"></slot></div><slot></slot>${el.hasAttribute('checked') ? `<div class="corner">${ico('check', 15, 14, '--sw:1.4')}</div>` : ''}`);

define('email-panel', `
:host{display:flex;flex-direction:column;width:640px;background:#fff;box-shadow:-1px 0 3px rgba(0,0,0,.3);z-index:1;position:relative;flex:none}
.head{height:49px;border-bottom:1px solid #c9c9c9;display:flex;align-items:center;padding:0 15px 0 12px;font-size:15.200px;flex:none}
.body{height:763px;overflow:hidden;display:flex}
.form{width:622px;flex:none;margin-top:-5px}
.bar{width:18px;position:relative;background:#fcfcfc;display:flex;flex-direction:column;align-items:center;color:#7d7d7d;padding:5px 0 2px 0}
.row{display:flex;width:320px;margin-left:54px}
.sel{flex:1;border:1px solid #706e6b;border-radius:4px;display:flex;align-items:center;height:32px}
hr{border:0;border-top:1px solid #c9c9c9;margin:0 21px 0 24px;height:0}
.handle{position:absolute;left:625px;top:23px;width:15px;height:34px;background:#fff;border:1px solid #dde4e6;border-right:0;border-radius:6px 0 0 6px;padding:3px 0 0 3px}
.handle div{width:11px;height:26px;background:#9cc5cd;display:flex;align-items:center;justify-content:flex-end}
.tips{position:absolute;left:274px;top:773px;width:350px;height:39px;background:#fff;border:1px solid #c9c9c9;border-bottom:0;border-radius:4px 4px 0 0;box-shadow:0 -1px 4px rgba(0,0,0,.25);display:flex;align-items:center;padding:5px 18.500px 0 16px}
.badge{width:16px;height:16px;border-radius:50%;background:#3b8cf0;color:#fff;font-size:10px;line-height:16px;text-align:center;margin-left:4px}`,
`<div class="head">${ico('bolt', 24)}<fit-text w="77" style="margin-left:8px">Send Email</fit-text><div style="flex:1"></div>${ico('x', 11, 11, 'color:#706e6b;--sw:1.2;margin-top:4px')}</div>
<div class="body"><div class="form">
<field-label text="Recipient Addresses" w="106"></field-label>
<lookup-input></lookup-input>
<value-pill style="width:298px;margin:2px 0 0 56px;padding-left:2px">${ico('aa', 19, 19)}<fit-text w="246" style="margin-left:5px">Contact from Get Member Contact &gt; Email</fit-text></value-pill>
<field-label text="CC Addresses" w="72" style="margin-top:34px"></field-label>
<lookup-input></lookup-input>
<field-label text="BCC Addresses" w="79" style="margin-top:36px"></field-label>
<lookup-input></lookup-input>
<hr style="margin-top:33px">
<section-title text="Configure Sender Details" w="175" style="margin-top:11px"></section-title>
<field-label text="Sender Type" w="65" style="margin-top:19px"></field-label>
<div class="row"><type-button></type-button><div class="sel" style="padding:0 9px 0 12px;justify-content:space-between"><fit-text w="129">OrgWideEmailAddress</fit-text>${ico('tri', 11, 8, 'color:#706e6b;margin-top:2px')}</div></div>
<field-label text="Sender Email Address" w="114" style="margin-top:34px"></field-label>
<div class="row"><type-button></type-button><div class="sel" style="padding-left:2px"><value-pill style="width:230px;padding-left:2px"><fit-text w="201">saiful@momentum-worldwide.com</fit-text></value-pill></div></div>
<hr style="margin-top:31px">
<section-title text="Configure Email Content" w="173" style="margin-top:11px"></section-title>
<div style="display:flex;gap:16px;padding:11px 0 0 24px">
<choice-card><fit-text slot="t" w="157">Compose Email Content</fit-text><fit-text w="174">Set email details and compose</fit-text><br><fit-text w="53">message.</fit-text></choice-card>
<choice-card checked><fit-text slot="t" w="128">Use Email Template</fit-text><fit-text w="191">Select an existing email template.</fit-text></choice-card></div>
<field-label text="Email Template ID" w="95" style="margin-top:30px"></field-label>
<div class="row"><type-button></type-button><div class="sel" style="padding-left:2px"><value-pill style="width:237px;padding-left:2px"><fit-text w="208">Non Member Payment Confirmation</fit-text></value-pill></div></div>
</div>
<div class="bar">${ico('tri', 10, 8, 'transform:scaleY(-1);margin-left:2px')}<div style="width:9px;height:330px;border-radius:5px;background:#8b8b8b;margin:177px 0 auto 2px"></div>${ico('tri', 10, 8, 'margin:0 0 2px 2px')}</div></div>
<div class="handle"><div><svg width="8" height="14"><path fill="#fff" d="M8 0v14L1 7z"/></svg></div></div>
<div class="tips">${ico('ring', 16)}<fit-text w="23" style="margin-left:12px">Tips</fit-text><div class="badge">1</div><div style="flex:1"></div>${ico('minus', 13, 13, 'color:#706e6b;--sw:1.5;margin:12px 16px 0 0')}${ico('x', 12, 12, 'color:#706e6b;--sw:1.2')}</div>`);

/* ---------- Taskbar ---------- */
define('task-app', `
:host{display:flex;flex-direction:column;align-items:center;width:44px;height:48px;flex:none;padding-top:12px;position:relative}
ui-icon{width:24px;height:24px;align-items:flex-end;position:relative}
i{width:6px;height:3px;border-radius:2px;background:#9a9a9a;margin-top:3.500px;position:relative}
:host([run=on]) i{width:16px;background:#4cb8ef}
:host([run=on]):before{content:"";position:absolute;left:2px;top:4px;width:39px;height:40px;border-radius:5px;background:#2e2e2e;border:1px solid #3a3a3a}`,
el => { const n = el.getAttribute('icon'); return `${ico(n, /^chrome./.test(n) ? 30 : 24)}${el.hasAttribute('run') ? '<i></i>' : ''}`; });
define('task-bar', `
:host{display:flex;height:48px;background:#202020;border-top:1px solid #484848;color:#fff;font-size:11.200px;position:relative;z-index:3}
.search{width:220px;height:32px;border-radius:16px;background:#3e3e3e;border:1px solid #505050;margin:7px 0 0 12px;display:flex;align-items:center;padding:0 6px 0 11px;color:#ddd}
.tray{display:flex;align-items:center;margin-left:auto;padding-right:20px}`,
`<div style="display:flex;width:485px;padding:0 0 2px 18px;align-items:center">${ico('moon', 24)}<div style="margin-left:8px;line-height:16px"><fit-text w="24">73°F</fit-text><br><fit-text w="65" style="color:#d0d0d0">Mostly clear</fit-text></div></div>
${ico('win', 23, 23, 'margin-top:12px')}
<div class="search" style="margin-left:13px">${ico('search', 15)}<fit-text w="41" style="margin-left:11px;font-size:12.600px">Search</fit-text><div style="flex:1"></div>${ico('scene', 44, 28)}</div>
<div style="display:flex;margin:-1px 0 0 2px">
${[['taskview'],['chat'],['folder',1],['edge'],['firefox'],['chromeface',1],['chromecam'],['chromes','on'],['monitor'],['cmd'],['pg'],['code',1],['pycharm'],['git'],['taskpro',1],['writer',1]].map(a => `<task-app icon="${a[0]}" ${a[1] ? `run="${a[1]}"` : ''}></task-app>`).join('')}</div>
<div class="tray">${ico('chevup', 11, 11, 'margin-right:19px')}${ico('wcloud', 16, 16, 'margin-right:16px')}${ico('kbd', 16, 12, 'margin-right:16px')}${ico('wifi', 16, 14, 'margin-right:8px')}${ico('vol', 17, 15, 'margin-right:15px')}<div style="line-height:16px;text-align:right;margin-right:9px;padding-bottom:1px"><fit-text w="43">6:27 PM</fit-text><br><fit-text w="55">12/4/2025</fit-text></div>${ico('bell', 14, 16)}</div>`);

define('desktop-screen', `
:host{display:flex;flex-direction:column;width:1920px;height:1080px;position:relative;background:#c8e8e0}
.main{display:flex;height:812px}`,
`<tab-strip></tab-strip><address-row></address-row><bookmark-bar></bookmark-bar><builder-header></builder-header><builder-toolbar></builder-toolbar>
<div class="main"><errors-panel></errors-panel><flow-canvas></flow-canvas><email-panel></email-panel></div><task-bar></task-bar>
${ico('pointer', 14, 22, 'position:absolute;left:1395.500px;top:-2px;z-index:5')}`);
</script>
</body>
</html>
